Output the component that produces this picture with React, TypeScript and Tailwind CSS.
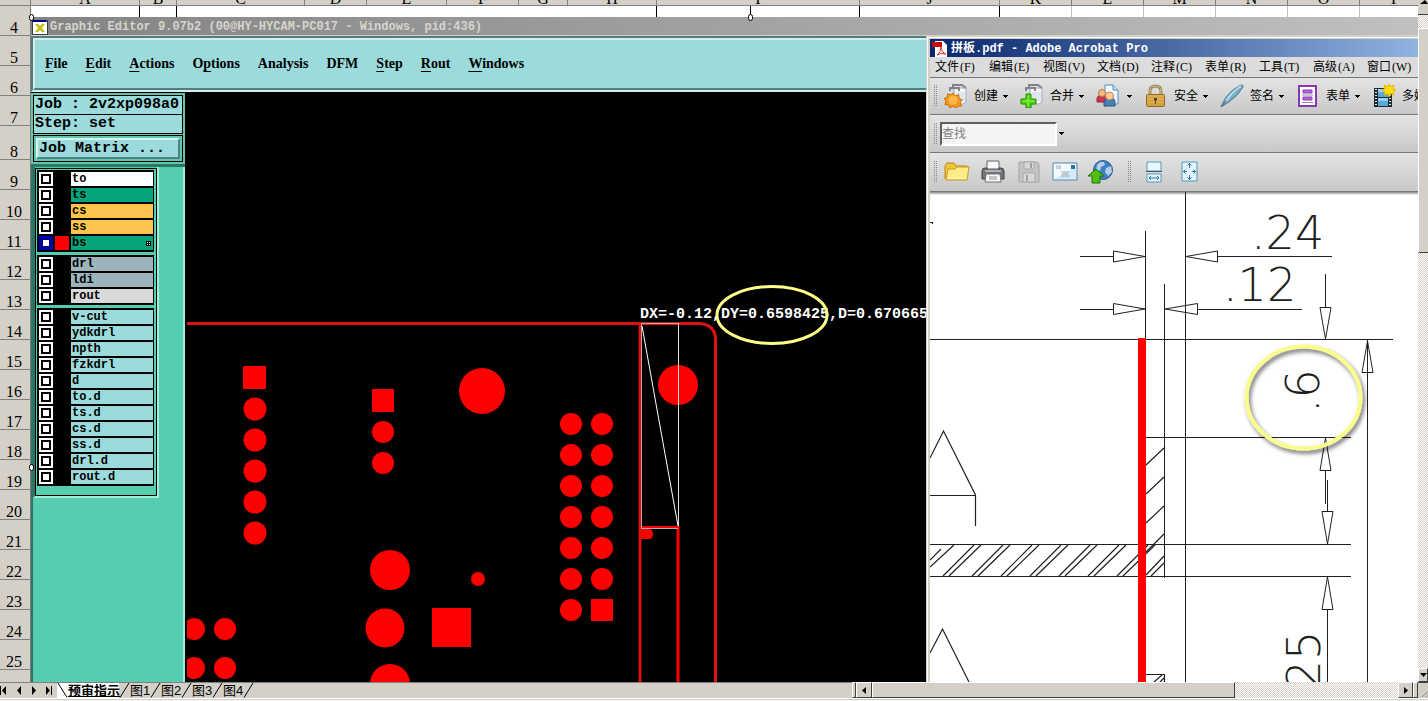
import type { ReactNode } from "react"

const mono = "font-['Liberation_Mono','Noto_Sans_CJK_SC',monospace]"
const cjk = "font-['Liberation_Sans','Noto_Sans_CJK_SC',sans-serif]"
const dither = "bg-[conic-gradient(#fff_25%,#d4d0c8_0_50%,#fff_0_75%,#d4d0c8_0)] bg-[length:2px_2px]"
const raised = "border border-t-white border-l-white border-r-[#404040] border-b-[#404040] bg-[#d4d0c8]"

const columns = [
  { name: "A", size: "w-[109px]", line: "border-black" },
  { name: "B", size: "w-[37px]", line: "border-black" },
  { name: "C", size: "w-32", line: "border-white" },
  { name: "D", size: "w-[62px]", line: "border-white" },
  { name: "E", size: "w-20", line: "border-white" },
  { name: "F", size: "w-[72px]", line: "border-white" },
  { name: "G", size: "w-[49px]", line: "border-white" },
  { name: "H", size: "w-[89px]", line: "border-black" },
  { name: "I", size: "w-[203px]", line: "border-black" },
  { name: "J", size: "w-[140px]", line: "border-black" },
  { name: "K", size: "w-[72px]", line: "border-[#c0c0c0]" },
  { name: "L", size: "w-[72px]", line: "border-[#c0c0c0]" },
  { name: "M", size: "w-[72px]", line: "border-[#c0c0c0]" },
  { name: "N", size: "w-[72px]", line: "border-[#c0c0c0]" },
  { name: "O", size: "w-[72px]", line: "border-[#c0c0c0]" },
  { name: "P", size: "w-[72px]", line: "border-[#c0c0c0]" },
]

const rows = Array.from({ length: 22 }, (_, i) => i + 4)

const editorMenu = [
  ["", "F", "ile"],
  ["", "E", "dit"],
  ["", "A", "ctions"],
  ["O", "p", "tions"],
  ["Analysis", "", ""],
  ["DFM", "", ""],
  ["", "S", "tep"],
  ["", "R", "out"],
  ["", "W", "indows"],
]

type Layer = { name: string; color: string; active?: boolean }

const teal = "bg-[#9bdbdb]"
const layerGroups: Layer[][] = [
  [
    { name: "to", color: "bg-white" },
    { name: "ts", color: "bg-[#04a47c]" },
    { name: "cs", color: "bg-[#fcc44c]" },
    { name: "ss", color: "bg-[#fcc44c]" },
    { name: "bs", color: "bg-[#04a47c]", active: true },
  ],
  [
    { name: "drl", color: "bg-[#9cb4bc]" },
    { name: "ldi", color: "bg-[#9cb4bc]" },
    { name: "rout", color: "bg-[#dadada]" },
  ],
  ["v-cut", "ydkdrl", "npth", "fzkdrl", "d", "to.d", "ts.d", "cs.d", "ss.d", "drl.d", "rout.d"].map((name) => ({
    name,
    color: teal,
  })),
]

function ColumnHeaders() {
  return (
    <div className="flex h-[6px] shrink-0 overflow-hidden border-b border-[#808080] bg-[#d4d0c8]">
      <div className="w-[31px] shrink-0 border-r border-[#808080]" />
      {columns.map((c) => (
        <div
          key={c.name}
          className={`${c.size} flex shrink-0 items-end justify-center border-r border-[#808080] font-['Liberation_Serif',serif] text-base leading-3`}
        >
          {c.name}
        </div>
      ))}
    </div>
  )
}

function RowHeaders() {
  return (
    <div className="w-[31px] shrink-0 overflow-hidden border-r border-[#808080] bg-[#d4d0c8] font-['Liberation_Serif',serif] text-base leading-3">
      {rows.map((n) => (
        <div
          key={n}
          className={`${n === 8 ? "h-[34px]" : "h-[30px]"} flex items-end justify-center border-b border-[#808080] pr-[2px] pb-px`}
        >
          {n}
        </div>
      ))}
    </div>
  )
}

function LayerRow({ layer }: { layer: Layer }) {
  return (
    <label className="flex h-4 items-center">
      <input
        type="checkbox"
        defaultChecked={layer.active}
        className="ml-[4px] h-[10px] w-[10px] shrink-0 appearance-none border-2 border-black bg-white outline-2 outline-white checked:border-[#00008c] checked:outline-[#0000b4]"
      />
      <span className={`ml-1 h-[14px] w-[14px] ${layer.active ? "bg-[#f00]" : "bg-black"}`} />
      <span
        className={`${layer.color} ${mono} mr-px ml-[2px] flex h-[14px] flex-1 items-center justify-between pl-px text-xs leading-[14px] font-bold`}
      >
        {layer.name}
        {layer.active && (
          <svg className="mr-[2px] h-[5px] w-[5px]" viewBox="0 0 5 5">
            <path d="M0 0h5v5H0z" />
            <path d="M1 1h1v1H1zM3 1h1v1H3zM1 3h1v1H1zM3 3h1v1H3z" fill="#fff" />
          </svg>
        )}
      </span>
    </label>
  )
}

function LayerPanel() {
  return (
    <aside className="flex w-[154px] shrink-0 flex-col border-t border-black bg-[#54cdb0]">
      <div className={`${mono} border-b-3 border-[#2c7463] bg-[#66c4ac] px-[2px] pt-[2px] pb-[2px] text-[15px] font-bold`}>
        <div className="border border-black bg-[#9bdbdb] pl-px leading-[18px]">
          <div className="border-b border-black whitespace-pre">Job : 2v2xp098a0</div>
          <div>Step: set</div>
        </div>
        <div className="mt-px border border-black p-[2px]">
          <button className="block w-full border-2 border-t-[#d4f4f2] border-r-[#4c8484] border-b-[#4c8484] border-l-[#d4f4f2] bg-[#9bdbdb] pl-px text-left leading-[17px]">
            Job Matrix ...
          </button>
        </div>
      </div>
      <div className="flex flex-1 flex-col items-start border-r-2 border-l-2 border-r-[#a4ecd8] border-l-[#2c7463]">
        <div className="w-[126px] border-r-2 border-b-2 border-l-2 border-r-[#a4ecd8] border-b-[#a4ecd8] border-l-[#2c7463] pt-px">
          <div className="flex flex-col gap-[3px] border border-black pt-px pr-[2px] pb-[9px] pl-px">
            {layerGroups.map((group, i) => (
              <div key={i} className="bg-black py-px">
                {group.map((layer) => (
                  <LayerRow key={layer.name} layer={layer} />
                ))}
              </div>
            ))}
          </div>
        </div>
      </div>
    </aside>
  )
}

const pads: [number, number, number][] = [
  ...[409, 440, 471, 502, 533].map((y): [number, number, number] => [255, y, 11.5]),
  [383, 432, 11],
  [383, 463, 11],
  [482, 391, 23],
  [678, 385, 20],
  [390, 570, 20],
  [385, 628, 19.5],
  [390, 684, 20],
  [478, 579, 7],
  [194, 629, 11],
  [225, 629, 11],
  [194, 668, 11],
  [225, 668, 11],
  ...[424, 455, 486, 517, 548, 579, 610].map((y): [number, number, number] => [571, y, 11]),
  ...[424, 455, 486, 517, 548, 579].map((y): [number, number, number] => [602, y, 11]),
]

function BoardCanvas() {
  return (
    <div className="min-w-0 flex-1 overflow-hidden bg-black pl-[2px]">
      <svg className="h-full w-full" viewBox="187 92 739 590" preserveAspectRatio="xMinYMin slice">
        <g fill="#f00">
          {pads.map(([x, y, r]) => (
            <circle key={`${x}-${y}`} cx={x} cy={y} r={r} />
          ))}
          <path d="M243 366h23v23h-23zM372 389h22v23h-22zM591 599h22v22h-22zM432 608h39v39h-39z" />
          <path d="M641 529h8q4 0 4 5t-4 5h-8z" />
        </g>
        <g fill="none" stroke="#e01010" strokeWidth="3">
          <path d="M187 323.5H700Q715.500 325 715.500 340V682" />
          <path d="M640 323V682" />
          <path d="M641 527.500H678V682" stroke="#f00" />
        </g>
        <path d="M641.500 323.500H678.500M641.500 323V528.500H678" stroke="#a8b0b4" fill="none" />
        <path d="M678.500 323V526" stroke="#ddd" fill="none" />
        <path d="M642 326L678 526" stroke="#fff" fill="none" />
        <text x="640" y="318" fill="#fff" fontSize="15" fontWeight="bold" fontFamily="'Liberation Mono', monospace">
          DX=-0.12,DY=0.6598425,D=0.670665
        </text>
        <ellipse cx="772" cy="315" rx="55" ry="28.5" fill="none" stroke="#ffff88" strokeWidth="3" />
      </svg>
    </div>
  )
}

function GraphicEditor() {
  return (
    <section className="flex min-w-0 flex-1 flex-col">
      <nav className="border-t-2 border-b-2 border-l-2 border-t-[#587c7c] border-b-[#d0f0ee] border-l-[#587c7c]">
        <ul className="flex h-[52px] items-center gap-[18px] border-t-2 border-b-2 border-l-2 border-t-[#d0f0ee] border-b-[#587c7c] border-l-[#d0f0ee] bg-[#9bdbdb] pl-[10px] font-['Liberation_Serif',serif] text-sm font-bold">
          {editorMenu.map(([before, key, after]) => (
            <li key={before + key + after}>
              <button className="block leading-4">
                {before}
                <span className="underline underline-offset-3">{key}</span>
                {after}
              </button>
            </li>
          ))}
        </ul>
      </nav>
      <div className="flex min-h-0 flex-1">
        <LayerPanel />
        <BoardCanvas />
      </div>
    </section>
  )
}

function Icon({ children, size = "h-6 w-6" }: { children: ReactNode; size?: string }) {
  return (
    <svg className={`${size} shrink-0`} viewBox="0 0 24 24" fill="none">
      {children}
    </svg>
  )
}

function PaperStack() {
  return (
    <>
      <path d="M10 4h12v14l-3 2H10z" fill="#f4f6fa" stroke="#a4a8b0" />
      <path d="M6 7V4h9v3M9 3V1h9l4 3" stroke="#808488" strokeWidth="2" />
      <path d="M12 8h9v9h-9z" fill="#e0e6f0" />
    </>
  )
}

const createIcon = (
  <Icon>
    <PaperStack />
    <path
      d="M9 9l2.300 2.700 3.500-.9.200 3.600 3.300 1.400-2 3 1.400 3.200-3.500.3L12 24l-3-1.800L6 24l-1.700-3-3.500-.5 1.300-3.300L0 14.500l3.400-1.200.3-3.500 3.400.9z"
      fill="#f09a20"
      stroke="#c87410"
    />
    <circle cx="9" cy="16" r="4.500" fill="#ffb848" />
  </Icon>
)

const combineIcon = (
  <Icon>
    <PaperStack />
    <path d="M6 10h5v5h5v5h-5v4H6v-4H1v-5h5z" fill="#50d810" stroke="#208808" />
    <path d="M8 12v10M3 17h11" stroke="#90f050" />
  </Icon>
)

const peopleIcon = (
  <Icon>
    <path d="M9 1h8l5 5v14H9z" fill="#f4f9ff" stroke="#4890c8" />
    <path d="M17 1v5h5" fill="#c8e0f4" stroke="#4890c8" />
    <path d="M1 18v-4q1-3 5-3t5 3v4z" fill="#c83850" stroke="#982038" />
    <circle cx="6" cy="9" r="3.500" fill="#f4bc88" stroke="#c07840" />
    <path d="M8 22v-4q1-4 6-4t5 4v4z" fill="#4880b8" stroke="#285080" />
    <circle cx="13.500" cy="12" r="4" fill="#fccc9c" stroke="#c88048" />
  </Icon>
)

const lockIcon = (
  <Icon>
    <path d="M6 12V7q0-5 5.500-5T17 7v5" stroke="#988050" strokeWidth="3" />
    <path d="M6 12V7q0-5 5.500-5T17 7v5" stroke="#d4c8a8" />
    <rect x="2.500" y="10.500" width="18" height="12" rx="1" fill="#d0a040" stroke="#98681c" />
    <path d="M3 12h17M3 15h17M3 18h17" stroke="#e4bc64" />
    <path d="M10 14h3v2l-1 1v3h-1v-3l-1-1z" fill="#604010" />
  </Icon>
)

const penIcon = (
  <Icon>
    <path d="M1 23L6 13Q12 5 21 1q3 0 2 2Q18 12 9 18z" fill="#78acc4" stroke="#58788c" />
    <path d="M6 17Q12 8 21 2" stroke="#b4dcec" strokeWidth="2" />
    <path d="M1 23l5-6" stroke="#506878" />
  </Icon>
)

const formIcon = (
  <Icon>
    <rect x="3" y="2" width="17" height="20" fill="#fff" stroke="#8838b0" strokeWidth="2" />
    <path d="M7 6h9v3H7zM7 13h9v3H7z" fill="#b868dc" stroke="#8838b0" />
    <path d="M6 11h11M6 18.500h11" stroke="#909090" />
  </Icon>
)

const filmIcon = (
  <Icon>
    <path d="M2 4h18v19H2z" fill="#202830" />
    <path d="M6 5h10v8H6zM6 14h10v8H6z" fill="#58a8d8" />
    <path d="M6 5h10v3H6zM6 14h10v3H6z" fill="#98d0f0" />
    <path d="M4 5v18M18 5v18" stroke="#e0e8f0" strokeWidth="2" strokeDasharray="1 2" />
    <path d="M17 0l1.500 3L22 1l-1 3.500 3 1.500-3 1.500L22 11l-3.500-1.500L17 13l-1.500-3.500L12 11l1-3.500L10 6l3-1.500L12 1l3.500 2z" fill="#ffe000" stroke="#e8b800" />
  </Icon>
)

function Caret() {
  return (
    <svg className="h-[7px] w-[7px] shrink-0" viewBox="0 0 7 7" shapeRendering="crispEdges">
      <path d="M1 2h5L3.500 5z" />
    </svg>
  )
}

function Grip() {
  return (
    <span className="h-[22px] w-1 shrink-0 bg-[conic-gradient(#888_25%,transparent_0)] bg-[length:2px_2px]" />
  )
}

const acrobatMenu = [
  ["文件", "F"],
  ["编辑", "E"],
  ["视图", "V"],
  ["文档", "D"],
  ["注释", "C"],
  ["表单", "R"],
  ["工具", "T"],
  ["高级", "A"],
  ["窗口", "W"],
]

const tasks: { label: string; title: string; icon: ReactNode }[] = [
  { label: "创建", title: "创建", icon: createIcon },
  { label: "合并", title: "合并", icon: combineIcon },
  { label: "", title: "协作", icon: peopleIcon },
  { label: "安全", title: "安全", icon: lockIcon },
  { label: "签名", title: "签名", icon: penIcon },
  { label: "表单", title: "表单", icon: formIcon },
  { label: "多媒体", title: "多媒体", icon: filmIcon },
]

const fileTools: { title: string; icon: ReactNode }[] = [
  {
    title: "打开",
    icon: (
      <svg className="h-[26px] w-[26px]" viewBox="0 0 26 26" fill="none">
        <path d="M1 20V7l2-3h7l2 3h11v4" fill="#f0c440" stroke="#b88810" />
        <path d="M2 21L4 10h7l2-2h12l-2 13z" fill="#ffec88" stroke="#c89818" />
        <path d="M4 19h17" stroke="#fff8c8" />
      </svg>
    ),
  },
  {
    title: "打印",
    icon: (
      <svg className="h-[26px] w-[26px]" viewBox="0 0 26 26" fill="none">
        <path d="M7 2h12v8H7z" fill="#f8fafc" stroke="#606468" />
        <path d="M2 12q0-3 3-3h2v2h12V9h2q3 0 3 3v8h-4v-4H6v4H2z" fill="#707478" stroke="#404448" />
        <path d="M5 12h16" stroke="#b0b4b8" strokeWidth="2" />
        <path d="M6 15h14l1 8H5z" fill="#f4f8fc" stroke="#707478" />
        <path d="M9 18h8M9 20h8" stroke="#909498" />
      </svg>
    ),
  },
  {
    title: "保存",
    icon: (
      <svg className="h-[26px] w-[26px]" viewBox="0 0 26 26" fill="none">
        <path d="M3 3h18l2 2v18H3z" fill="#c4c4c4" stroke="#a4a4a4" />
        <path d="M8 3h10v7H8zM7 14h12v9H7z" fill="#d8d8d8" stroke="#a8a8a8" />
        <path d="M14 4h2v5h-2zM10 16h2v6h-2z" fill="#a0a0a0" />
      </svg>
    ),
  },
  {
    title: "电子邮件",
    icon: (
      <svg className="h-[26px] w-[26px]" viewBox="0 0 26 26" fill="none">
        <path d="M1 4h24v17H1z" fill="#f4faff" stroke="#4888b0" />
        <path d="M2 20L24 8v12z" fill="#d4e8f8" />
        <path d="M19 6h4v4h-4z" fill="#3070a8" />
        <path d="M4 7h5M4 9h5M9 13h8M10 15h6M9 17h9" stroke="#a0a8b0" />
      </svg>
    ),
  },
  {
    title: "上载",
    icon: (
      <svg className="h-[26px] w-[26px]" viewBox="0 0 26 26" fill="none">
        <circle cx="15" cy="11" r="9.500" fill="#4080c0" stroke="#2c5c94" />
        <path d="M9 6q3-4 7-3l1 3-4 2-1 4-4-1zM18 9l5-2 1 6-4 4-3-4z" fill="#b0d0ec" />
        <path d="M8 10l8 7h-4v7H4v-7H0z" fill="#50c010" stroke="#207008" />
      </svg>
    ),
  },
]

const viewTools: { title: string; icon: ReactNode }[] = [
  {
    title: "适合宽度",
    icon: (
      <svg className="h-[26px] w-[26px]" viewBox="0 0 26 26" fill="none">
        <path d="M6 3h14v9H6zM6 15h14v8H6z" fill="#e8f6ff" stroke="#5898b8" />
        <path d="M5 12.500h16" stroke="#405868" />
        <path d="M8 19h10M10 17l-2 2 2 2M16 17l2 2-2 2" stroke="#2878a8" />
      </svg>
    ),
  },
  {
    title: "适合页面",
    icon: (
      <svg className="h-[26px] w-[26px]" viewBox="0 0 26 26" fill="none">
        <path d="M5 3h15v19H5z" fill="#e0f2fc" stroke="#5898b8" />
        <path
          d="M12.500 4v5M10.500 6.500l2-2 2 2M12.500 21v-5M10.500 18.500l2 2 2-2M6 12.500h4M8.500 10.500l-2 2 2 2M19 12.500h-4M16.500 10.500l2 2-2 2"
          stroke="#2878a8"
        />
      </svg>
    ),
  },
]

// hatch strokes repeat every 29px along the slot
const hatch = [0, 1, 2, 3, 4, 5, 6]

function Drawing() {
  return (
    <svg className="h-full w-full" viewBox="930 192 488 490" preserveAspectRatio="xMinYMin slice" fill="none">
      <defs>
        <linearGradient id="edge" x1="0" y1="0" x2="0" y2="1">
          <stop offset="0" stopColor="#888" />
          <stop offset="1" stopColor="#fff" />
        </linearGradient>
        <filter id="shadow" x="-20%" y="-20%" width="140%" height="140%">
          <feDropShadow dx="2" dy="3" stdDeviation="2" floodColor="#000" floodOpacity="0.6" />
        </filter>
      </defs>
      <rect x="930" y="192" width="488" height="3" fill="url(#edge)" />
      <g stroke="#202020">
        <path d="M1185.500 192V682M1145.500 231V339M1164.500 284V578M1367.500 340V682" />
        <path d="M930 339.500H1393M1146 437.500H1351M930 544.500H1351M930 576.500H1351" />
        <path d="M1080 256.500H1113M1217 256.500H1332M1080 309.500H1113M1198 309.500H1302" />
        <path d="M1325.500 274V307M1325.500 470V504M1327.500 480V511M1327.500 609V682" />
        <path d="M1113.500 251L1145 256.500L1113.500 262ZM1217.500 251L1186 256.500L1217.500 262Z" />
        <path d="M1113.500 303.500L1145 309L1113.500 314.500ZM1197.500 303.500L1165 309L1197.500 314.500Z" />
        <path d="M1320 307.500L1325.500 339L1331 307.500ZM1362 372.500L1367.500 341L1373 372.500Z" />
        <path d="M1320 470.500L1325.500 438L1331 470.500ZM1322 511.500L1327.500 544L1333 511.500ZM1322 609.500L1327.500 577L1333 609.500Z" />
      </g>
      <g stroke="#202020" strokeWidth="1.2">
        <path d="M930 458L943.500 431L975.500 495V526M930 495.500H975.500M930 653L942.500 629L969 682" />
        <path d="M1146 465L1164 448M1146 494L1164 477M1146 523L1164 506M1146 552L1164 534M1146 575L1164 556M1151 576L1164 563" />
        <path d="M930 560L941 549M930 567L954 545" />
        {hatch.map((i) => (
          <path key={i} d={`M${943 + i * 29} 576L${974 + i * 29} 545M${949 + i * 29} 576L${981 + i * 29} 545`} />
        ))}
        <path d="M1146 674.500H1164.500V682M1154 682L1162 675M1160 682L1164 678M930 222.500H932.500V224" />
      </g>
      <path d="M1138 338h8v344h-8z" fill="#f00" />
      <g fill="#202020" fontSize="46" fontWeight="200" fontFamily="'DejaVu Sans', sans-serif">
        <text x="1251" y="249">.24</text>
        <text x="1223" y="301">.12</text>
        <text transform="translate(1319 413) rotate(-90)">.6</text>
        <text transform="translate(1320 704) rotate(-90)">.25</text>
      </g>
      <ellipse cx="1303.500" cy="397.500" rx="57" ry="51" stroke="#fcfc8c" strokeWidth="4" filter="url(#shadow)" />
    </svg>
  )
}

function Acrobat() {
  const bar = "flex items-center overflow-hidden border-b border-[#787878] bg-linear-to-b from-[#e4e4e4] to-[#c8c8c8]"
  return (
    <section className="flex w-[492px] shrink-0 flex-col border-t border-l border-[#d4d0c8]">
      <div className="flex min-h-0 flex-1 flex-col border-t border-l border-white">
        <div className="flex min-h-0 flex-1 flex-col border-t border-l-2 border-[#d4d0c8]">
          <header
            className={`${mono} flex h-[18px] shrink-0 items-center gap-1 bg-linear-to-r from-[#0c266c] to-[#90b4e0] pt-[2px] pl-[2px] text-xs font-bold whitespace-pre text-white`}
          >
            <svg className="h-4 w-[15px]" viewBox="0 0 15 16" fill="none">
              <path d="M3 0h8l4 4v12H3z" fill="#fff" />
              <path d="M0 1h10v5H0z" fill="#c80808" />
              <path d="M5 14q4-3 4-8 1 6 5 7-5-2-9 1" stroke="#d83028" />
            </svg>
            拼板.pdf - Adobe Acrobat Pro
          </header>
          <nav className="h-[21px] shrink-0 overflow-hidden border-b border-[#787878] bg-[#dcdcdc] pt-px pl-[5px]">
            <ul className="flex">
              {acrobatMenu.map(([label, key]) => (
                <li key={key} className="w-[54px] shrink-0">
                  <button className={`${cjk} flex items-center gap-px text-xs leading-[19px]`}>
                    {label}
                    <span className="font-['Liberation_Serif',serif]">({key})</span>
                  </button>
                </li>
              ))}
            </ul>
          </nav>
          <div className={`${bar} h-[37px] shrink-0 pl-[3px]`}>
            <Grip />
            <div className="ml-[7px] flex gap-[11px]">
              {tasks.map((task) => (
                <button key={task.title} aria-label={task.title} className={`${cjk} flex shrink-0 items-center text-xs`}>
                  {task.icon}
                  {task.label ? <span className="mr-[4px] ml-[6px]">{task.label}</span> : <span className="w-[6px]" />}
                  <Caret />
                </button>
              ))}
            </div>
          </div>
          <div className={`${bar} h-[38px] shrink-0 pl-[3px]`}>
            <Grip />
            <input
              type="text"
              aria-label="查找"
              placeholder="查找"
              className={`${cjk} ml-[3px] h-6 w-[117px] border-2 border-t-[#606060] border-r-white border-b-white border-l-[#606060] bg-[#f4f4f4] text-xs placeholder:text-[#808080]`}
            />
            <button aria-label="查找选项" className="ml-px">
              <Caret />
            </button>
          </div>
          <div className={`${bar} h-[39px] shrink-0 pl-[3px]`}>
            <Grip />
            <div className="ml-[7px] flex gap-[10px]">
              {fileTools.map((tool) => (
                <button key={tool.title} aria-label={tool.title}>
                  {tool.icon}
                </button>
              ))}
            </div>
            <div className="ml-[13px] flex items-center gap-[10px]">
              <Grip />
              {viewTools.map((tool) => (
                <button key={tool.title} aria-label={tool.title} className="shrink-0">
                  {tool.icon}
                </button>
              ))}
            </div>
          </div>
          <div className="min-h-0 flex-1 overflow-hidden bg-white">
            <Drawing />
          </div>
        </div>
      </div>
    </section>
  )
}

function VerticalScroll() {
  return (
    <div className="flex w-[10px] shrink-0 flex-col overflow-hidden bg-[#d4d0c8]">
      <div className="flex h-[15px] justify-end overflow-hidden border-b border-[#404040]">
        <svg className="h-2 w-2" viewBox="0 0 8 8">
          <path d="M0 4h8L5 0z" />
        </svg>
      </div>
      <div className={`${dither} h-[13px]`} />
      <div className="h-[225px] border-t border-b border-l border-t-white border-b-[#404040] border-l-white" />
      <div className={`${dither} flex-1`} />
      <button aria-label="向下滚动" className={`${raised} flex h-[14px] items-center justify-end`}>
        <svg className="h-1 w-[7px] shrink-0" viewBox="0 0 7 4">
          <path d="M0 0h7L3.500 4z" />
        </svg>
      </button>
    </div>
  )
}

function Slash({ flip }: { flip?: boolean }) {
  return (
    <svg className="h-[15px] w-[11px] shrink-0" viewBox="0 0 11 15" fill="none" stroke="#000">
      <path d={flip ? "M1 0L10 14.500" : "M10 0L1 14.500"} />
    </svg>
  )
}

const sheets = ["图1", "图2", "图3", "图4"]

const navArrows = [
  { title: "第一张", d: "M0 2h1v9H0zM6 2v9L2 6.500z" },
  { title: "上一张", d: "M6 2v9L2 6.500z" },
  { title: "下一张", d: "M2 2v9l4-4.500z" },
  { title: "最后一张", d: "M1 2v9l4-4.500zM6 2h1v9H6z" },
]

function SheetBar() {
  return (
    <footer className="flex h-[19px] shrink-0 flex-col bg-[#d4d0c8]">
      <div className="flex h-4">
        <div className={`${cjk} flex min-w-0 flex-1 overflow-hidden border-t border-[#808080] text-[13px] leading-[15px]`}>
          <div className="flex w-[57px] shrink-0 gap-1">
            {navArrows.map((a) => (
              <button key={a.title} aria-label={a.title} className="shrink-0">
                <svg className="h-[13px] w-[11px]" viewBox="0 0 11 13">
                  <path d={a.d} />
                </svg>
              </button>
            ))}
          </div>
          <div className="flex bg-white">
            <Slash flip />
            <button className="w-[51px] shrink-0 text-[13px] font-bold whitespace-nowrap underline">预审指示</button>
          </div>
          <Slash />
          {sheets.map((s) => (
            <div key={s} className="flex">
              <button className="w-5 shrink-0 whitespace-nowrap">{s}</button>
              <Slash />
            </div>
          ))}
        </div>
        <div className="flex w-[576px] shrink-0">
          <div className={`${raised} w-1`} />
          <button aria-label="向左滚动" className={`${raised} flex w-4 items-center justify-center`}>
            <svg className="h-[7px] w-1" viewBox="0 0 4 7">
              <path d="M4 0v7L0 3.500z" />
            </svg>
          </button>
          <div className={`${raised} w-[363px]`} />
          <div className={`${dither} flex-1`} />
          <button aria-label="向右滚动" className={`${raised} flex w-[15px] items-center justify-center`}>
            <svg className="h-[7px] w-1" viewBox="0 0 4 7">
              <path d="M0 0v7l4-3.500z" />
            </svg>
          </button>
          <div className={`${raised} w-[5px]`} />
          <svg className="h-4 w-[10px] border-t border-[#404040]" viewBox="0 0 10 16" stroke="#808080">
            <path d="M4 15L10 9M8 15L10 13" />
          </svg>
        </div>
      </div>
      <div className="h-px bg-white" />
      <div className="mt-px h-px bg-[#f4f4f0]" />
    </footer>
  )
}

const handle = "absolute z-10 h-[7px] w-[5px] rounded-full border border-black bg-white"

export default function App() {
  return (
    <main className="flex h-screen flex-col overflow-hidden bg-white text-black">
      <div className="flex min-h-0 flex-1">
        <div className="relative flex min-w-0 flex-1 flex-col overflow-hidden">
          <ColumnHeaders />
          <div className="flex min-h-0 flex-1">
            <RowHeaders />
            <div className="flex min-w-0 flex-1 flex-col">
              <div className="flex h-[11px] shrink-0 overflow-hidden bg-white">
                {columns.map((c) => (
                  <div key={c.name} className={`${c.size} ${c.line} shrink-0 border-r`} />
                ))}
              </div>
              <header
                className={`${mono} flex h-[19px] shrink-0 items-center gap-[2px] border-b border-[#d4d0c8] bg-linear-to-r from-[#848484] to-[#c0c0c0] pt-[2px] pl-px text-xs font-bold whitespace-pre text-[#d8d4cc]`}
              >
                <svg className="h-4 w-4" viewBox="0 0 16 16">
                  <path d="M0 1h16v15H0z" fill="#404040" />
                  <path d="M1 3h14v12H1z" fill="#fff" />
                  <path d="M0 1h14v2H0z" fill="#000080" />
                  <path d="M3 5h3l2 2 2-2h3l-3 4 3 4h-3l-2-2-2 2H3l3-4z" fill="#c8c010" />
                </svg>
                Graphic Editor 9.07b2 (00@HY-HYCAM-PC017 - Windows, pid:436)
              </header>
              <div className="flex min-h-0 flex-1">
                <GraphicEditor />
                <Acrobat />
              </div>
            </div>
          </div>
          <span className={`${handle} top-[14px] left-[748px]`} />
          <span className="absolute top-[6px] left-[750px] h-2 w-px bg-black" />
          <span className={`${handle} top-[14px] left-[29px]`} />
          <span className={`${handle} top-[464px] left-[29px]`} />
        </div>
        <VerticalScroll />
      </div>
      <SheetBar />
    </main>
  )
}
